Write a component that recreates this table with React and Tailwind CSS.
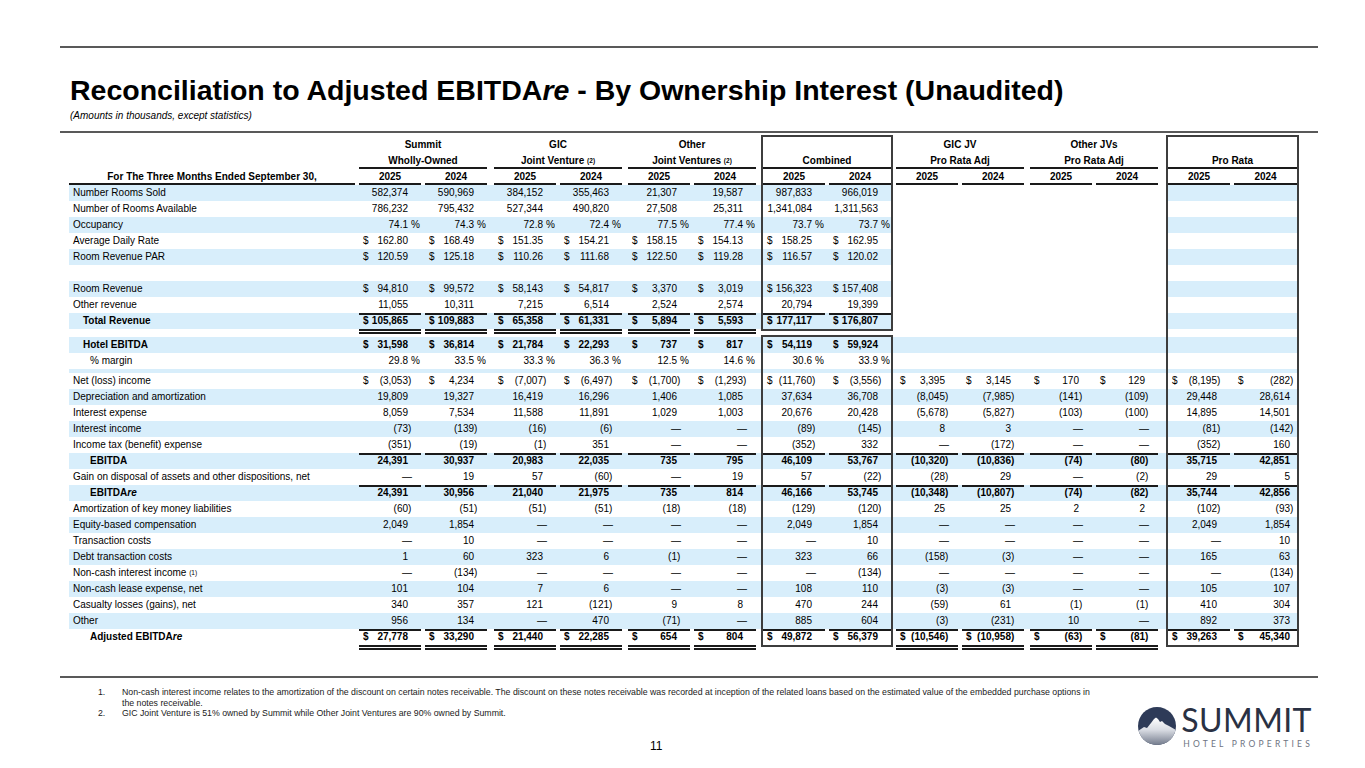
import React from "react";

const FONT = "font-['Liberation_Sans',Arial,sans-serif]";
const BLUE = "bg-[#d8eefb]";

// rule lines under / over figures
const TOP = "shadow-[inset_0_2px_0_#1a1a1a]";
const DBL = "shadow-[0_2px_0_#1a1a1a,0_3px_0_#ffffff,0_5px_0_#1a1a1a]";
const TOPDBL = "shadow-[inset_0_2px_0_#1a1a1a,0_2px_0_#1a1a1a,0_3px_0_#ffffff,0_5px_0_#1a1a1a]";
const UNDER = "shadow-[inset_0_-2px_0_#1a1a1a]";
const BOXTOP = "shadow-[0_-2px_0_#3d3d3d]";
const BOXBOT = "shadow-[0_2px_0_#3d3d3d]";

const A_ML = ["", "ml-[4px]", "ml-[7px]", "ml-[4px]", "ml-[6px]", "ml-[4px]"];
const B_ML = ["", "ml-[4px]", "ml-[6px]", "ml-[4px]"];

const L = (spec) =>
  spec.split("").map((c) => ({ t: TOP, d: DBL, b: TOPDBL, "-": "" }[c]));

const Re = () => <span className="italic">re</span>;

const rows = [
  { label: "Number Rooms Sold", blue: true, vals: ["582,374", "590,969", "384,152", "355,463", "21,307", "19,587", "987,833", "966,019"] },
  { label: "Number of Rooms Available", vals: ["786,232", "795,432", "527,344", "490,820", "27,508", "25,311", "1,341,084", "1,311,563"] },
  { label: "Occupancy", blue: true, vals: ["74.1 %", "74.3 %", "72.8 %", "72.4 %", "77.5 %", "77.4 %", "73.7 %", "73.7 %"] },
  { label: "Average Daily Rate", vals: ["$ 162.80", "$ 168.49", "$ 151.35", "$ 154.21", "$ 158.15", "$ 154.13", "$ 158.25", "$ 162.95"] },
  { label: "Room Revenue PAR", blue: true, vals: ["$ 120.59", "$ 125.18", "$ 110.26", "$ 111.68", "$ 122.50", "$ 119.28", "$ 116.57", "$ 120.02"] },
  { label: "" },
  { label: "Room Revenue", blue: true, vals: ["$ 94,810", "$ 99,572", "$ 58,143", "$ 54,817", "$ 3,370", "$ 3,019", "$ 156,323", "$ 157,408"] },
  { label: "Other revenue", vals: ["11,055", "10,311", "7,215", "6,514", "2,524", "2,574", "20,794", "19,399"] },
  {
    label: "Total Revenue", lc: "pl-[14px]", bold: true, blue: true, comb: "bottom",
    lines: L("bbbbbbtt------"),
    vals: ["$ 105,865", "$ 109,883", "$ 65,358", "$ 61,331", "$ 5,894", "$ 5,593", "$ 177,117", "$ 176,807"],
  },
  { spacer: "h-[8px]", comb: "none" },
  {
    label: "Hotel EBITDA", lc: "pl-[14px]", bold: true, blue: true, bBlue: true, comb: "top",
    vals: ["$ 31,598", "$ 36,814", "$ 21,784", "$ 22,293", "$ 737", "$ 817", "$ 54,119", "$ 59,924"],
  },
  { label: "% margin", lc: "pl-[21px]", vals: ["29.8 %", "33.5 %", "33.3 %", "36.3 %", "12.5 %", "14.6 %", "30.6 %", "33.9 %"] },
  { spacer: "h-[4px]", blue: true, bBlue: true },
  { label: "Net (loss) income", vals: ["$ (3,053)", "$ 4,234", "$ (7,007)", "$ (6,497)", "$ (1,700)", "$ (1,293)", "$ (11,760)", "$ (3,556)", "$ 3,395", "$ 3,145", "$ 170", "$ 129", "$ (8,195)", "$ (282)"] },
  { label: "Depreciation and amortization", blue: true, bBlue: true, vals: ["19,809", "19,327", "16,419", "16,296", "1,406", "1,085", "37,634", "36,708", "(8,045)", "(7,985)", "(141)", "(109)", "29,448", "28,614"] },
  { label: "Interest expense", vals: ["8,059", "7,534", "11,588", "11,891", "1,029", "1,003", "20,676", "20,428", "(5,678)", "(5,827)", "(103)", "(100)", "14,895", "14,501"] },
  { label: "Interest income", blue: true, bBlue: true, vals: ["(73)", "(139)", "(16)", "(6)", "—", "—", "(89)", "(145)", "8", "3", "—", "—", "(81)", "(142)"] },
  { label: "Income tax (benefit) expense", vals: ["(351)", "(19)", "(1)", "351", "—", "—", "(352)", "332", "—", "(172)", "—", "—", "(352)", "160"] },
  {
    label: "EBITDA", lc: "pl-[21px]", bold: true, blue: true, bBlue: true, lines: L("tttttttttttttt"),
    vals: ["24,391", "30,937", "20,983", "22,035", "735", "795", "46,109", "53,767", "(10,320)", "(10,836)", "(74)", "(80)", "35,715", "42,851"],
  },
  { label: "Gain on disposal of assets and other dispositions, net", vals: ["—", "19", "57", "(60)", "—", "19", "57", "(22)", "(28)", "29", "—", "(2)", "29", "5"] },
  {
    label: <>EBITDA<Re /></>, lc: "pl-[21px]", bold: true, blue: true, bBlue: true, lines: L("tttttttttttttt"),
    vals: ["24,391", "30,956", "21,040", "21,975", "735", "814", "46,166", "53,745", "(10,348)", "(10,807)", "(74)", "(82)", "35,744", "42,856"],
  },
  { label: "Amortization of key money liabilities", vals: ["(60)", "(51)", "(51)", "(51)", "(18)", "(18)", "(129)", "(120)", "25", "25", "2", "2", "(102)", "(93)"] },
  { label: "Equity-based compensation", blue: true, bBlue: true, vals: ["2,049", "1,854", "—", "—", "—", "—", "2,049", "1,854", "—", "—", "—", "—", "2,049", "1,854"] },
  { label: "Transaction costs", vals: ["—", "10", "—", "—", "—", "—", "—", "10", "—", "—", "—", "—", "—", "10"] },
  { label: "Debt transaction costs", blue: true, bBlue: true, vals: ["1", "60", "323", "6", "(1)", "—", "323", "66", "(158)", "(3)", "—", "—", "165", "63"] },
  {
    label: <>Non-cash interest income <sup className="text-[6.5px] relative -top-[1px]">(1)</sup></>,
    vals: ["—", "(134)", "—", "—", "—", "—", "—", "(134)", "—", "—", "—", "—", "—", "(134)"],
  },
  { label: "Non-cash lease expense, net", blue: true, bBlue: true, vals: ["101", "104", "7", "6", "—", "—", "108", "110", "(3)", "(3)", "—", "—", "105", "107"] },
  { label: "Casualty losses (gains), net", vals: ["340", "357", "121", "(121)", "9", "8", "470", "244", "(59)", "61", "(1)", "(1)", "410", "304"] },
  { label: "Other", blue: true, bBlue: true, vals: ["956", "134", "—", "470", "(71)", "—", "885", "604", "(3)", "(231)", "10", "—", "892", "373"] },
  {
    label: <>Adjusted EBITDA<Re /></>, lc: "pl-[21px]", bold: true, comb: "bottom", pr: "bottom",
    lines: L("bbbbbbttbbbbtt"),
    vals: ["$ 27,778", "$ 33,290", "$ 21,440", "$ 22,285", "$ 654", "$ 804", "$ 49,872", "$ 56,379", "$ (10,546)", "$ (10,958)", "$ (63)", "$ (81)", "$ 39,263", "$ 45,340"],
  },
];

function Cell({ v = "", bold, line = "", ml = "", w = "w-[62px]", tight }) {
  let dollar = false;
  let body = v;
  let suf = "";
  if (body.startsWith("$ ")) {
    dollar = true;
    body = body.slice(2);
  }
  if (body.endsWith(")")) {
    suf = ")";
    body = body.slice(0, -1);
  } else if (body.endsWith(" %")) {
    suf = "%";
    body = body.slice(0, -2);
  }
  const sufW = body === "—" ? "w-[9px]" : tight ? "w-[7px]" : "w-[13px]";
  return (
    <div className={`${w} ${ml} ${line} h-full shrink-0 flex items-center ${bold ? "font-bold" : ""}`}>
      {dollar && <span className="pl-[4px]">$</span>}
      <span className="flex-1 min-w-0 text-right whitespace-nowrap">{body}</span>
      <span className={`${sufW} shrink-0 ${suf === "%" ? "pl-[3px]" : ""}`}>{suf}</span>
    </div>
  );
}

function Row({ r }) {
  const { label = "", lc = "pl-[4px]", bold, vals = [], blue, bBlue, lines = [], comb = "", pr = "", spacer } = r;
  const cell = (i, ml, extra = {}) => (
    <Cell key={i} v={vals[i]} bold={bold} line={lines[i]} ml={ml} {...extra} />
  );
  return (
    <div className={`flex ${spacer || "h-[16px]"}`}>
      <div className={`flex ${blue ? BLUE : ""}`}>
        <div className={`w-[290px] h-full flex items-center whitespace-nowrap ${lc} ${bold ? "font-bold" : ""}`}>
          <span>{label}</span>
        </div>
        {A_ML.map((ml, i) => cell(i, ml))}
        <div
          className={`ml-[5px] w-[132px] h-full flex ${comb === "none" ? "" : "border-x-2 border-[#3d3d3d]"} ${
            comb === "top" ? BOXTOP : comb === "bottom" ? BOXBOT : ""
          }`}
        >
          {cell(6, "")}
          {cell(7, "ml-[4px]")}
        </div>
      </div>
      <div className={`flex w-[273px] h-full pl-[3px] ${bBlue ? BLUE : ""}`}>
        {B_ML.map((ml, i) => cell(8 + i, ml))}
      </div>
      <div className={`w-[133px] h-full flex border-x-2 border-[#3d3d3d] ${blue ? BLUE : ""} ${pr === "bottom" ? BOXBOT : ""}`}>
        {cell(12, "")}
        {cell(13, "ml-[4px]", { w: "w-[63px]", tight: true })}
      </div>
    </div>
  );
}

function Group({ w = "w-[128px]", ml = "", under, children }) {
  return (
    <div className={`${w} ${ml} h-full shrink-0 flex items-center justify-center font-bold whitespace-nowrap ${under ? UNDER : ""}`}>
      <span>{children}</span>
    </div>
  );
}

const Sup = ({ n }) => <sup className="text-[6.5px] relative -top-[1px]">({n})</sup>;

function Header() {
  const years = ["2025", "2024"];
  return (
    <>
      {/* group names */}
      <div className="flex h-[16px]">
        <div className="flex">
          <div className="w-[290px]" />
          <Group>Summit</Group>
          <Group ml="ml-[7px]">GIC</Group>
          <Group ml="ml-[6px]">Other</Group>
          <div className={`ml-[5px] w-[132px] h-full border-x-2 border-[#3d3d3d] ${BOXTOP}`} />
        </div>
        <div className="flex w-[273px] h-full pl-[3px]">
          <Group>GIC JV</Group>
          <Group ml="ml-[6px]">Other JVs</Group>
        </div>
        <div className={`w-[133px] h-full border-x-2 border-[#3d3d3d] ${BOXTOP}`} />
      </div>

      <div className="flex h-[16px]">
        <div className="flex">
          <div className="w-[290px]" />
          <Group under>Wholly-Owned</Group>
          <Group ml="ml-[7px]" under>
            Joint Venture <Sup n={2} />
          </Group>
          <Group ml="ml-[6px]" under>
            Joint Ventures <Sup n={2} />
          </Group>
          <div className="ml-[5px] w-[132px] h-full flex border-x-2 border-[#3d3d3d]">
            <Group under>Combined</Group>
          </div>
        </div>
        <div className="flex w-[273px] h-full pl-[3px]">
          <Group under>Pro Rata Adj</Group>
          <Group ml="ml-[6px]" under>
            Pro Rata Adj
          </Group>
        </div>
        <div className="w-[133px] h-full flex border-x-2 border-[#3d3d3d]">
          <Group w="w-[129px]" under>
            Pro Rata
          </Group>
        </div>
      </div>

      {/* years */}
      <div className="flex h-[16px]">
        <div className="flex">
          <div className="w-[290px] h-full">
            <div className={`w-[286px] h-full flex items-center justify-center font-bold ${UNDER}`}>
              For The Three Months Ended September 30,
            </div>
          </div>
          {A_ML.map((ml, i) => (
            <Group key={i} w="w-[62px]" ml={ml} under>
              {years[i % 2]}
            </Group>
          ))}
          <div className="ml-[5px] w-[132px] h-full flex border-x-2 border-[#3d3d3d]">
            <Group w="w-[62px]" under>2025</Group>
            <Group w="w-[62px]" ml="ml-[4px]" under>2024</Group>
          </div>
        </div>
        <div className="flex w-[273px] h-full pl-[3px]">
          {B_ML.map((ml, i) => (
            <Group key={i} w="w-[62px]" ml={ml} under>
              {years[i % 2]}
            </Group>
          ))}
        </div>
        <div className="w-[133px] h-full flex border-x-2 border-[#3d3d3d]">
          <Group w="w-[62px]" under>2025</Group>
          <Group w="w-[63px]" ml="ml-[4px]" under>2024</Group>
        </div>
      </div>
    </>
  );
}

function Logo() {
  return (
    <div className="flex items-start">
      <svg width="38" height="38" viewBox="0 0 38 38" className="mt-[6px] shrink-0">
        <defs>
          <clipPath id="summit-clip">
            <circle cx="19" cy="19" r="19" />
          </clipPath>
          <linearGradient id="summit-grad" x1="0" y1="0" x2="0" y2="1">
            <stop offset="0" stopColor="#ffffff" />
            <stop offset="0.45" stopColor="#d9dce3" />
            <stop offset="1" stopColor="#737b8c" />
          </linearGradient>
        </defs>
        <g clipPath="url(#summit-clip)">
          <rect width="38" height="38" fill="#2e3b58" />
          <path
            d="M0 24 L6 20 L9 21 L13 16 L16 12 L18 10.5 L20 12 L22 15 L24 14 L27 17 L31 19 L38 23 L38 38 L0 38 Z"
            fill="url(#summit-grad)"
          />
        </g>
      </svg>
      <div className="ml-[5px] flex flex-col">
        <div className="font-['Lato',sans-serif] text-[32px] leading-[38px] tracking-[0.4px] text-[#2a3143] whitespace-nowrap">
          SUMMIT
        </div>
        <div className="font-['Lato',sans-serif] text-[8.5px] leading-[10px] tracking-[3.2px] text-[#6e7482] ml-[2px] whitespace-nowrap">
          HOTEL PROPERTIES
        </div>
      </div>
    </div>
  );
}

export default function App() {
  return (
    <div className={`w-[1365px] h-[768px] bg-white overflow-hidden text-black ${FONT}`}>
      <div className="pt-[46px]">
        <div className="ml-[60px] w-[1258px] h-[2px] bg-[#595959]" />

        <h1 className="ml-[70px] mt-[26px] text-[28.5px] leading-[32px] font-bold whitespace-nowrap">
          Reconciliation to Adjusted EBITDA<span className="italic">re</span> - By Ownership Interest (Unaudited)
        </h1>
        <p className="ml-[70px] mt-[4px] text-[10px] leading-[12px] italic">(Amounts in thousands, except statistics)</p>

        <div className="ml-[60px] mt-[9px] w-[1258px] h-[2px] bg-[#595959]" />

        {/* table */}
        <div className="ml-[69px] mt-[4px] text-[10px] leading-none">
          <Header />
          {rows.map((r, i) => (
            <Row key={i} r={r} />
          ))}
        </div>

        <div className="ml-[60px] mt-[31px] w-[1258px] h-[2px] bg-[#595959]" />

        <div className="flex">
          <div className="ml-[98px] mt-[9px]">
            <div className="text-[8.75px] leading-[10.5px] text-[#1a1a1a]">
              <div className="flex">
                <span className="w-[24px] shrink-0">1.</span>
                <span className="whitespace-nowrap">
                  Non-cash interest income relates to the amortization of the discount on certain notes receivable. The discount on these notes receivable was recorded at inception of the related loans based on the estimated value of the embedded purchase options in
                  <br />
                  the notes receivable.
                </span>
              </div>
              <div className="flex">
                <span className="w-[24px] shrink-0">2.</span>
                <span>GIC Joint Venture is 51% owned by Summit while Other Joint Ventures are 90% owned by Summit.</span>
              </div>
            </div>
            <div className="ml-[552px] mt-[20px] text-[12px] leading-[14px]">11</div>
          </div>
          <div className="ml-auto mr-[52px] mt-[23px]">
            <Logo />
          </div>
        </div>
      </div>
    </div>
  );
}
